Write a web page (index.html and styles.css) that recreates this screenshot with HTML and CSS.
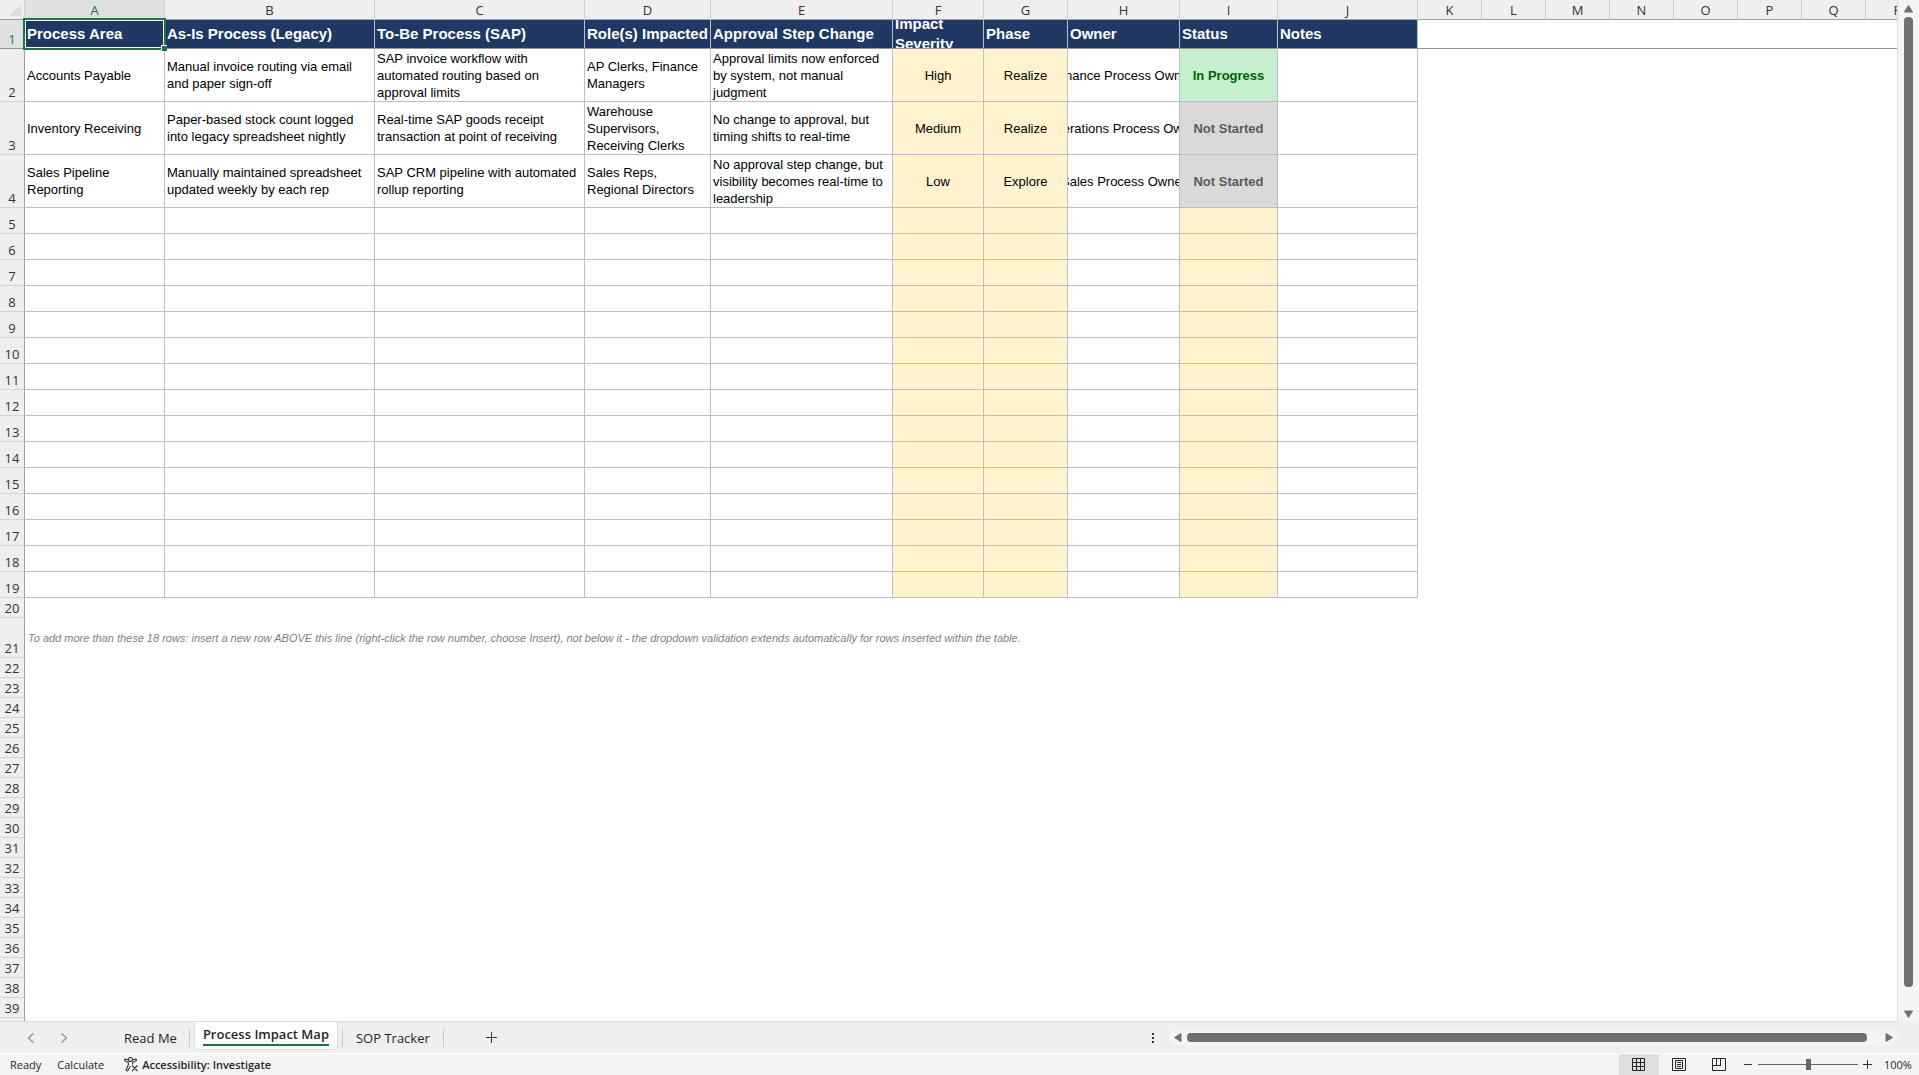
FILE: index.html
```html
<!DOCTYPE html>
<html lang="en">
<head>
    <meta charset="UTF-8">
    <meta name="viewport" content="width=device-width, initial-scale=1.0">
    <title>Process Impact Map</title>
    <link rel="stylesheet" href="styles.css">
</head>
<body>

    <main class="workspace">
        <div class="sheet">
            <table class="grid">
                <colgroup>
                    <col class="col-num">
                    <col class="col-a">
                    <col class="col-b">
                    <col class="col-c">
                    <col class="col-d">
                    <col class="col-e">
                    <col class="col-f">
                    <col class="col-g">
                    <col class="col-h">
                    <col class="col-i">
                    <col class="col-j">
                    <col class="col-std" span="8">
                </colgroup>
                <thead>
                    <tr class="letters">
                        <th class="corner"><svg width="12" height="12" viewBox="0 0 12 12"><path d="M12 0V12H0Z" fill="#dfdfdf"/></svg></th>
                        <th class="active">A</th><th>B</th><th>C</th><th>D</th><th>E</th><th>F</th><th>G</th><th>H</th><th>I</th><th>J</th>
                        <th>K</th><th>L</th><th>M</th><th>N</th><th>O</th><th>P</th><th>Q</th><th>R</th>
                    </tr>
                </thead>
                <tbody id="rows">
                    <tr class="titles">
                        <th class="num active">1</th>
                        <td class="selected"><div class="cell">Process Area</div><span class="handle"></span></td>
                        <td><div class="cell">As-Is Process (Legacy)</div></td>
                        <td><div class="cell">To-Be Process (SAP)</div></td>
                        <td><div class="cell">Role(s) Impacted</div></td>
                        <td><div class="cell">Approval Step Change</div></td>
                        <td><div class="cell">Impact Severity</div></td>
                        <td><div class="cell">Phase</div></td>
                        <td><div class="cell">Owner</div></td>
                        <td><div class="cell">Status</div></td>
                        <td><div class="cell">Notes</div></td>
                        <td class="outside" colspan="8"></td>
                    </tr>
                    <tr class="entry">
                        <th class="num">2</th>
                        <td><div class="cell">Accounts Payable</div></td>
                        <td><div class="cell">Manual invoice routing via email and paper sign-off</div></td>
                        <td><div class="cell">SAP invoice workflow with automated routing based on approval limits</div></td>
                        <td><div class="cell">AP Clerks, Finance Managers</div></td>
                        <td><div class="cell">Approval limits now enforced by system, not manual judgment</div></td>
                        <td class="pick"><div class="cell center">High</div></td>
                        <td class="pick"><div class="cell center">Realize</div></td>
                        <td><div class="cell center">Finance Process Owner</div></td>
                        <td class="progress"><div class="cell center">In Progress</div></td>
                        <td></td>
                    </tr>
                    <tr class="entry">
                        <th class="num">3</th>
                        <td><div class="cell">Inventory Receiving</div></td>
                        <td><div class="cell">Paper-based stock count logged into legacy spreadsheet nightly</div></td>
                        <td><div class="cell">Real-time SAP goods receipt transaction at point of receiving</div></td>
                        <td><div class="cell">Warehouse Supervisors, Receiving Clerks</div></td>
                        <td><div class="cell">No change to approval, but timing shifts to real-time</div></td>
                        <td class="pick"><div class="cell center">Medium</div></td>
                        <td class="pick"><div class="cell center">Realize</div></td>
                        <td><div class="cell center">Operations Process Owner</div></td>
                        <td class="waiting"><div class="cell center">Not Started</div></td>
                        <td></td>
                    </tr>
                    <tr class="entry">
                        <th class="num">4</th>
                        <td><div class="cell">Sales Pipeline Reporting</div></td>
                        <td><div class="cell">Manually maintained spreadsheet updated weekly by each rep</div></td>
                        <td><div class="cell">SAP CRM pipeline with automated rollup reporting</div></td>
                        <td><div class="cell">Sales Reps, Regional Directors</div></td>
                        <td><div class="cell">No approval step change, but visibility becomes real-time to leadership</div></td>
                        <td class="pick"><div class="cell center">Low</div></td>
                        <td class="pick"><div class="cell center">Explore</div></td>
                        <td><div class="cell center">Sales Process Owner</div></td>
                        <td class="waiting"><div class="cell center">Not Started</div></td>
                        <td></td>
                    </tr>
                </tbody>
            </table>
        </div>
        <div class="vscroll">
            <svg width="9" height="8" viewBox="0 0 9 8"><path d="M4.5 0.5L8.5 7H0.5Z" fill="#707070" stroke="#707070" stroke-linejoin="round"/></svg>
            <div class="thumb"></div>
            <svg width="9" height="8" viewBox="0 0 9 8"><path d="M4.5 7.5L0.5 1H8.5Z" fill="#707070" stroke="#707070" stroke-linejoin="round"/></svg>
        </div>
    </main>

    <nav class="tabbar">
        <div class="arrows">
            <button aria-label="Previous sheet"><svg width="8" height="12" viewBox="0 0 8 12"><path d="M6.5 1.5L1.5 6L6.5 10.5" fill="none" stroke="#9a9a9a" stroke-width="1.5"/></svg></button>
            <button aria-label="Next sheet"><svg width="8" height="12" viewBox="0 0 8 12"><path d="M1.5 1.5L6.5 6L1.5 10.5" fill="none" stroke="#9a9a9a" stroke-width="1.5"/></svg></button>
        </div>
        <button class="tab">Read Me</button>
        <button class="tab current"><span>Process Impact Map</span></button>
        <button class="tab last">SOP Tracker</button>
        <button class="add" aria-label="New sheet"><svg width="11" height="11" viewBox="0 0 11 11"><path d="M5.5 0V11M0 5.5H11" stroke="#333"/></svg></button>
        <div class="dots"><i></i><i></i><i></i></div>
        <div class="hscroll">
            <svg width="8" height="9" viewBox="0 0 8 9"><path d="M0.5 4.5L7 0.5V8.5Z" fill="#707070" stroke="#707070" stroke-linejoin="round"/></svg>
            <div class="thumb"></div>
            <svg width="8" height="9" viewBox="0 0 8 9"><path d="M7.5 4.5L1 0.5V8.5Z" fill="#707070" stroke="#707070" stroke-linejoin="round"/></svg>
        </div>
    </nav>

    <footer class="status">
        <span class="ready">Ready</span>
        <span class="calc">Calculate</span>
        <button class="access">
            <svg width="15" height="15" viewBox="0 0 15 15" fill="none" stroke="#333" stroke-width="1.1"><circle cx="6.5" cy="2.5" r="2"/><path d="M4.5 3L1.5 2C0.3 2 0.3 3.6 1.3 4L4.3 5.3V8L2.3 12.5C2 14 3.5 14.3 4 13.3L6.3 9.3M8.5 3L11.5 2C12.7 2 12.7 3.6 11.7 4L8.7 5.3V7.5M8 8.5L13.5 14M13.5 8.5L8 14"/></svg>
            Accessibility: Investigate
        </button>
        <div class="views">
            <button class="view on" aria-label="Normal"><svg width="14" height="14" viewBox="0 0 14 14" fill="none" stroke="#262626"><path d="M0.5 0.5H12.5V12.5H0.5ZM4.5 0V13M8.5 0V13M0 4.5H13M0 8.5H13"/></svg></button>
            <button class="view" aria-label="Page Layout"><svg width="14" height="14" viewBox="0 0 14 14" fill="none" stroke="#262626"><path d="M0.5 0.5H13.5V12.5H0.5ZM3.5 2.5H10.5V10.5H3.5ZM5 4.5H9M5 6.5H9M5 8.5H9"/></svg></button>
            <button class="view" aria-label="Page Break Preview"><svg width="14" height="14" viewBox="0 0 14 14" fill="none" stroke="#262626"><path d="M0.5 0.5H13.5V12.5H0.5ZM4.5 0V7M8.5 0V7M0 7.5H9"/></svg></button>
        </div>
        <button class="zoom-btn" aria-label="Zoom out"><svg width="9" height="9" viewBox="0 0 9 9"><path d="M0 4.5H8" stroke="#333"/></svg></button>
        <input class="zoom" type="range" min="0" max="100" value="50" aria-label="Zoom">
        <button class="zoom-btn" aria-label="Zoom in"><svg width="9" height="9" viewBox="0 0 9 9"><path d="M0 4.5H9M4.5 0V9" stroke="#333"/></svg></button>
        <span class="percent">100%</span>
    </footer>

    <script>
        let rows = document.getElementById("rows");
        let html = "";

        // Empty table rows, F, G and I are drop-down columns
        for (let n = 5; n <= 19; n++) {
            html += `<tr class="blank"><th class="num">${n}</th>`;
            for (let c of "ABCDEFGHIJ") {
                html += "FGI".includes(c) ? '<td class="pick"></td>' : "<td></td>";
            }
            html += "</tr>";
        }

        // Rows below the table
        for (let n = 20; n <= 39; n++) {
            let note = "";
            if (n == 21) {
                note = "To add more than these 18 rows: insert a new row ABOVE this line (right-click the row number, choose Insert), not below it - the dropdown validation extends automatically for rows inserted within the table.";
            }
            html += `<tr class="${note ? "note" : "below"}"><th class="num">${n}</th><td class="outside" colspan="18">${note}</td></tr>`;
        }
        html += '<tr class="below"><th class="num"></th><td class="outside" colspan="18"></td></tr>';
        rows.insertAdjacentHTML("beforeend", html);
    </script>

</body>
</html>
```
FILE: styles.css
```css
* {
    box-sizing: border-box;
}
body {
    margin: 0;
    height: 100vh;
    display: flex;
    flex-direction: column;
    overflow: hidden;
    background: #efefef;
    color: #262626;
    font-family: "Open Sans", "Noto Sans", sans-serif;
}
button {
    padding: 0;
    border: none;
    background: none;
    color: inherit;
    font-family: inherit;
}
svg {
    display: block;
    flex: none;
}

/* Sheet */
.workspace {
    flex: 1;
    min-height: 0;
    display: flex;
}
.sheet {
    flex: 1;
    min-width: 0;
    overflow: hidden;
    background: #fff;
    border-right: 1px solid #dcdcdc;
    border-bottom: 1px solid #dcdcdc;
}
.grid {
    table-layout: fixed;
    width: 1930px;
    border-collapse: separate;
    border-spacing: 0;
    font-family: "Liberation Sans", Arial, sans-serif;
    font-size: 13px;
    line-height: 17px;
    color: #000;
}
.col-num { width: 25px; }
.col-a, .col-j { width: 140px; }
.col-b, .col-c { width: 210px; }
.col-d { width: 126px; }
.col-e { width: 182px; }
.col-f { width: 91px; }
.col-g { width: 84px; }
.col-h { width: 112px; }
.col-i { width: 98px; }
.col-std { width: 64px; }

.grid th,
.grid td {
    padding: 0;
    border-right: 1px solid #bfbfbf;
    border-bottom: 1px solid #bfbfbf;
}
.grid .letters th {
    height: 20px;
    padding-top: 1px;
    background: #efefef;
    border-right-color: #d0d0d0;
    border-bottom-color: #a0a0a0;
    color: #333;
    font-family: "Open Sans", "Noto Sans", sans-serif;
    font-size: 13px;
    font-weight: normal;
}
.grid .num {
    background: #efefef;
    border-right-color: #a0a0a0;
    border-bottom-color: #d4d4d4;
    color: #333;
    font-family: "Open Sans", "Noto Sans", sans-serif;
    font-size: 13px;
    font-weight: normal;
    vertical-align: bottom;
}
.grid .letters .active,
.grid .num.active {
    background: #e0e0e0;
    color: #217346;
}
.corner svg {
    margin-left: 9px;
}
.cell {
    display: flex;
    align-items: center;
    padding: 0 2px;
    overflow: hidden;
}
.center {
    justify-content: center;
    white-space: nowrap;
}
.titles th,
.titles td {
    height: 29px;
}
.titles td {
    background: #203864;
    color: #fff;
    font-size: 15px;
    font-weight: bold;
    line-height: 20px;
}
.grid .titles th,
.grid .titles td {
    border-bottom-color: #969696;
}
.titles .cell {
    height: 28px;
}
.entry .cell {
    height: 52px;
}
.entry td {
    height: 53px;
}
.blank td {
    height: 26px;
}
.below td {
    height: 20px;
}
.note td {
    height: 40px;
    color: #808080;
    font-size: 11px;
    font-style: italic;
}
.grid .outside {
    background: #fff;
    border-right: none;
}
.grid .below td,
.grid .note td {
    border: none;
}
.grid .note td {
    padding-left: 3px;
}
.pick {
    background: #fff2cc;
}
.progress {
    background: #c6efce;
    color: #006100;
    font-weight: bold;
}
.waiting {
    background: #d9d9d9;
    color: #595959;
    font-weight: bold;
}
.selected {
    position: relative;
}
.selected::after {
    content: "";
    position: absolute;
    inset: -2px;
    border: 2px solid #217346;
    box-shadow: inset 0 0 0 1px #fff;
}
.handle {
    position: absolute;
    right: -3px;
    bottom: -3px;
    z-index: 1;
    width: 6px;
    height: 6px;
    background: #217346;
    border-top: 1px solid #fff;
    border-left: 1px solid #fff;
}

/* Scroll bars */
.vscroll {
    width: 21px;
    padding: 5px 0 4px;
    display: flex;
    flex-direction: column;
    align-items: center;
    gap: 4px;
    background: #f4f4f4;
}
.thumb {
    flex: 1;
    background: #707070;
    border-radius: 4px;
}
.vscroll .thumb {
    width: 9px;
    margin-bottom: 19px;
}
.hscroll {
    width: 38%;
    height: 17px;
    margin-right: 21px;
    padding: 0 5px;
    display: flex;
    align-items: center;
    gap: 5px;
    background: #f4f4f4;
    border-radius: 9px;
}
.hscroll .thumb {
    height: 9px;
    margin-right: 13px;
}

/* Sheet tabs */
.tabbar {
    height: 31px;
    display: flex;
    align-items: center;
}
.arrows {
    width: 114px;
    padding-left: 27px;
    display: flex;
    gap: 25px;
}
.tab {
    height: 18px;
    padding: 0 12px 0 10px;
    border-right: 1px solid #c8c8c8;
    font-size: 13px;
    line-height: 18px;
}
.tab.current {
    align-self: flex-start;
    height: 28px;
    margin: 0 4px;
    padding: 0 8px;
    background: #fff;
    border: 1px solid #dcdcdc;
    border-top: none;
    border-radius: 0 0 5px 5px;
    font-weight: 600;
}
.tab.current span {
    display: block;
    padding-bottom: 1px;
    border-bottom: 2px solid #107c41;
}
.tab.last {
    padding: 0 13px;
    border-left: 1px solid #c8c8c8;
}
.add {
    margin-left: 42px;
}
.dots {
    margin-left: auto;
    margin-right: 15px;
    display: flex;
    flex-direction: column;
    gap: 2px;
}
.dots i {
    width: 2px;
    height: 2px;
    background: #333;
}

/* Status bar */
.status {
    height: 22px;
    padding: 0 8px 0 10px;
    display: flex;
    align-items: center;
    background: #f4f4f4;
    border-top: 1px solid #fff;
    font-size: 11px;
}
.calc {
    margin-left: 16px;
}
.access {
    margin-left: 20px;
    display: flex;
    align-items: center;
    gap: 3px;
    font-size: 11px;
    font-weight: 600;
}
.views {
    margin-left: auto;
    display: flex;
    align-self: stretch;
}
.view {
    width: 40px;
    display: flex;
    align-items: center;
    justify-content: center;
}
.view.on {
    background: #dedede;
}
.zoom-btn {
    margin: 0 5px;
}
.zoom {
    appearance: none;
    width: 100px;
    height: 12px;
    margin: 0;
    background: linear-gradient(#666, #666) center / 100% 1px no-repeat;
}
.zoom::-webkit-slider-thumb {
    appearance: none;
    width: 5px;
    height: 11px;
    background: #666;
}
.percent {
    width: 27px;
    margin-left: 7px;
}
```
